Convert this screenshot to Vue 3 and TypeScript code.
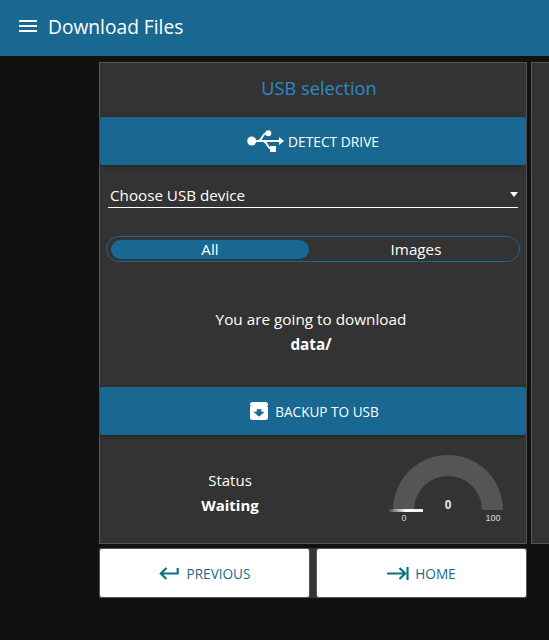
<script setup lang="ts">
const title = 'Download Files'
</script>

<template>
  <div class="page">
    <header class="topbar">
      <svg class="menu" width="18" height="12" viewBox="0 0 18 12"><path d="M0 1h18M0 6h18M0 11h18" stroke="#fff" stroke-width="2" /></svg>
      <span class="title">{{ title }}</span>
    </header>
    <main class="main">
      <div class="column">
        <section class="panel">
          <h2 class="heading">USB selection</h2>
          <button class="action usb">
            <svg width="38" height="24" viewBox="0 0 38 24">
              <circle cx="4.700" cy="12" r="4.500" fill="#fff" />
              <path d="M5 12h28M11 12c4 0 4.500-7.700 8-7.700h2M16 12c4 0 4.500 7.700 8 7.700h2" stroke="#fff" stroke-width="1.800" fill="none" />
              <circle cx="21.300" cy="4.300" r="3" fill="#fff" />
              <rect x="23" y="17" width="6" height="6" fill="#fff" />
              <path d="M32 8l5 4-5 4z" fill="#fff" />
            </svg>
            <span>DETECT DRIVE</span>
          </button>
          <div class="select">
            <span>Choose USB device</span>
            <i class="caret"></i>
          </div>
          <div class="toggle">
            <span class="opt on">All</span>
            <span class="opt">Images</span>
          </div>
          <div class="message">
            <p>You are going to download</p>
            <p class="strong">data/</p>
          </div>
          <button class="action backup">
            <svg width="18" height="18" viewBox="0 0 18 18">
              <path d="M2.500 0h13A2.500 2.500 0 0 1 18 2.500v13a2.500 2.500 0 0 1-2.500 2.500h-13A2.500 2.500 0 0 1 0 15.500v-13A2.500 2.500 0 0 1 2.500 0z" fill="#fff" />
              <path d="M0 4h1M17 4h1" stroke="#186891" stroke-width="1" />
              <path d="M6.700 7.300h4.600v2.400h3.400L9 14.700 3.300 9.700h3.400z" fill="#186891" />
            </svg>
            <span>BACKUP TO USB</span>
          </button>
          <div class="status">
            <div class="status-text">
              <p>Status</p>
              <p class="strong">Waiting</p>
            </div>
            <svg class="gauge" width="130" height="70" viewBox="0 0 130 70">
              <defs>
                <linearGradient id="needle" x1="0" x2="1" y1="0" y2="0">
                  <stop offset="0" stop-color="#fff" stop-opacity="0.1" />
                  <stop offset="0.5" stop-color="#fff" />
                  <stop offset="1" stop-color="#eee" />
                </linearGradient>
              </defs>
              <path d="M10 55a55 55 0 0 1 110 0H99a34 34 0 0 0-68 0z" fill="#555" />
              <rect x="6" y="54" width="34" height="3" fill="url(#needle)" />
              <text x="21" y="66" class="small">0</text>
              <text x="110" y="66" class="small">100</text>
              <text x="65" y="54" class="value">0</text>
            </svg>
          </div>
        </section>
        <div class="nav">
          <button class="nav-btn">
            <svg width="20" height="13" viewBox="0 0 20 13"><path d="M18.700 1v5.500H2M7.500 1L1.800 6.500 7.500 12" stroke="#0b7480" stroke-width="2.200" fill="none" /></svg>
            <span>PREVIOUS</span>
          </button>
          <button class="nav-btn home">
            <svg width="22" height="13" viewBox="0 0 22 13"><path d="M0 6.500h18M12.500 1l5.700 5.500-5.700 5.500" stroke="#0b7480" stroke-width="2.200" fill="none" /><path d="M20.500 0v13" stroke="#0b7480" stroke-width="2.200" /></svg>
            <span>HOME</span>
          </button>
        </div>
      </div>
      <section class="panel peek"></section>
    </main>
  </div>
</template>

<style>
html, body { margin: 0; background: #111; }
</style>

<style scoped>
.page {
  width: 549px;
  height: 640px;
  overflow: hidden;
  background: #111;
  font-family: "Open Sans", "Noto Sans", sans-serif;
  color: #fff;
}
.topbar {
  box-sizing: border-box;
  height: 56px;
  background: #186891;
  display: flex;
  align-items: center;
  padding: 0 0 4px 19px;
  gap: 11px;
}
.title { font-size: 19.200px; }
.main {
  display: flex;
  gap: 4px;
  padding: 6px 0 0 99px;
}
.column { width: 428px; flex: none; }
.panel {
  box-sizing: border-box;
  height: 482px;
  background: #333;
  border: 1px solid #555;
}
.peek { width: 60px; flex: none; }
.heading {
  margin: 0;
  height: 54px;
  padding-left: 12px;
  line-height: 50px;
  text-align: center;
  font-size: 18.200px;
  font-weight: 400;
  color: #2b8ac9;
}
.action {
  display: flex;
  width: 100%;
  height: 48px;
  border: 0;
  border-radius: 2px;
  padding: 0;
  align-items: center;
  justify-content: center;
  gap: 7px;
  background: #186891;
  color: #fff;
  font: inherit;
  font-size: 13.800px;
  box-shadow: 0 1px 4px rgba(0, 0, 0, .35);
}
.action span { padding-top: 1px; }
.action.usb { gap: 3px; }
.action.backup { padding-left: 3px; font-size: 13.600px; }
.select {
  position: relative;
  margin: 8px 8px 0;
  height: 35px;
  box-sizing: border-box;
  border-bottom: 1px solid #fff;
  padding: 12px 2px 0;
  font-size: 15.200px;
  line-height: 20px;
}
.caret {
  position: absolute;
  right: 0;
  top: 19px;
  border: 4.500px solid transparent;
  border-top: 5px solid #fff;
  border-bottom: 0;
}
.toggle {
  margin: 28px 6px 0;
  height: 26px;
  box-sizing: border-box;
  border: 1px solid #186891;
  border-radius: 13px;
  padding: 3px 4px 2px;
  display: flex;
  font-size: 15.200px;
}
.opt {
  flex: 1;
  padding-left: 8px;
  text-align: center;
  line-height: 19px;
  border-radius: 10px;
}
.opt.on { flex: none; width: 198px; padding-left: 0; background: #186891; }
.message {
  box-sizing: border-box;
  margin-top: 45px;
  height: 80px;
  padding-right: 4px;
  text-align: center;
  font-size: 15.300px;
  line-height: 25px;
}
p { margin: 0; }
.strong { font-weight: 700; }
.status {
  display: flex;
  align-items: flex-start;
  margin-top: 20px;
  text-align: center;
  font-size: 15px;
  line-height: 25px;
}
.status-text { width: 260px; padding-top: 13px; }
.gauge { margin-left: 23px; }
.small { font: 9px "Liberation Sans", sans-serif; fill: #ddd; text-anchor: middle; }
.value { font: 700 12px "Liberation Sans", sans-serif; fill: #eee; text-anchor: middle; }
.nav {
  margin-top: 4px;
  height: 50px;
  display: flex;
  gap: 6px;
  background: #333;
}
.nav-btn {
  flex: 1;
  display: flex;
  align-items: center;
  justify-content: center;
  gap: 8px;
  background: #fff;
  border: 1px solid #555;
  border-radius: 3px;
  padding: 0;
  color: #186891;
  font: inherit;
  font-size: 13.600px;
}
.nav-btn span { padding-top: 1px; }
.nav-btn.home { gap: 6px; }
</style>
